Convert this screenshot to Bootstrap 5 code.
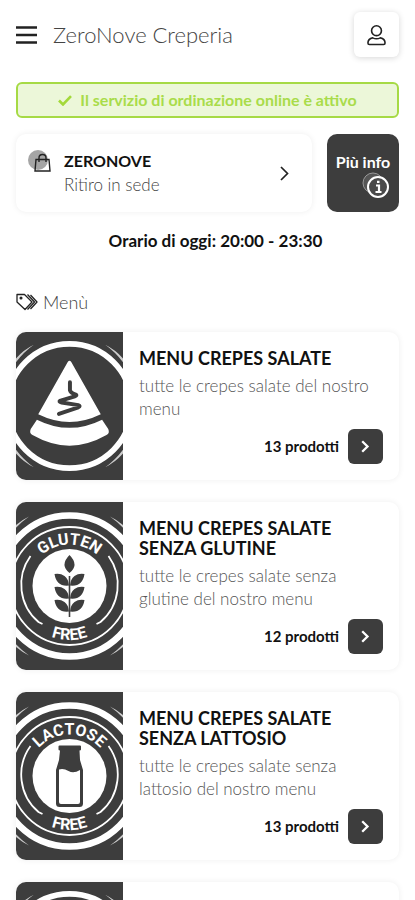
<!DOCTYPE html>
<html lang="it">
<head>
<meta charset="utf-8">
<meta name="viewport" content="width=device-width, initial-scale=1">
<title>ZeroNove Creperia</title>
<link href="https://cdn.jsdelivr.net/npm/bootstrap@5.3.0/dist/css/bootstrap.min.css" rel="stylesheet">
<style>
  :root { --ink: #3d3d3d; --lime: #a6da45; }
  body { font-family: Lato, "Century Gothic", sans-serif; color: #111; background: #fff; }
  svg { display: block; flex: none; }
  .soft { border: 0; border-radius: 10px; background: #fff; box-shadow: 0 0 6px rgba(0,0,0,.07); }
  .brand-name { font-size: 22px; font-weight: 300; line-height: 24px; color: #444; }
  .profile { width: 45px; height: 45px; border-radius: 6px; box-shadow: 0 1px 6px rgba(0,0,0,.16); }
  .status { height: 36px; margin-top: 25px; border: 2px solid var(--lime); border-radius: 6px; background: #ecf7d9; color: #a9dc4a; font-size: 16px; font-weight: 700; }
  .top-row { gap: 15px; }
  .place { height: 78px; padding: 0 23px 0 11px; color: #111; }
  .place-name { font-size: 16px; font-weight: 700; line-height: 24px; }
  .place-mode { font-size: 17px; font-weight: 300; line-height: 24px; color: #444; }
  .more-info { width: 72px; border: 0; border-radius: 10px; background: var(--ink); color: #fff; font-size: 16px; font-weight: 700; line-height: 20px; padding: 4px 9px 0; }
  .hours { font-size: 17px; font-weight: 700; line-height: 24px; margin-top: 17px; }
  .section-title { font-size: 18px; font-weight: 300; line-height: 24px; margin: 37px 0 18px; color: #444; gap: 5px; }
  .menu-list { gap: 22px; }
  .menu-item { color: #111; min-height: 148px; overflow: hidden; }
  .thumb { width: 107px; background: var(--ink); position: relative; flex: none; }
  .thumb svg { position: absolute; inset: 0; width: 100%; height: 100%; }
  .item-title { font-size: 18px; font-weight: 700; line-height: 20px; margin: 0 0 6px; }
  .item-text { font-size: 17px; font-weight: 300; line-height: 23px; margin: 0 0 9px; color: #555; }
  .item-count { font-size: 15px; font-weight: 700; gap: 9px; }
  .go { width: 35px; height: 35px; border-radius: 6px; background: var(--ink); }
  .ring-word { font: 700 16px Roboto, sans-serif; fill: #fff; text-anchor: middle; }
</style>
<script src="https://cdn.jsdelivr.net/npm/bootstrap@5.3.0/dist/js/bootstrap.bundle.min.js"></script>
</head>
<body>
<svg width="0" height="0" class="position-absolute" aria-hidden="true">
  <defs>
    <path id="arcTop" d="M42.500 84a41.500 41.500 0 0 1 83 0"/>
    <path id="arcBottom" d="M30 84a54 54 0 0 0 108 0"/>
    <g id="frame" fill="none" stroke="#fff">
      <circle cx="84" cy="84" r="70.500" stroke-width="6.500"/>
      <path id="tick" d="M43.500 14.500Q30 21 20 34V39Q30 24 43.500 14.500Z" fill="#ccc" stroke="none"/>
      <use href="#tick" transform="rotate(180 84 84)"/>
      <use href="#tick" transform="matrix(-1 0 0 1 168 0)"/>
      <use href="#tick" transform="matrix(1 0 0 -1 0 168)"/>
    </g>
    <g id="seal">
      <use href="#frame"/>
      <g fill="none" stroke="#fff" stroke-width="1.800">
        <circle cx="84" cy="84" r="59"/>
        <path d="M45 54A49 49 0 0 0 53 120L57 122M123 54A49 49 0 0 1 115 120L111 122"/>
      </g>
      <circle cx="84" cy="84" r="37" fill="#fff"/>
      <text class="ring-word"><textPath href="#arcBottom" startOffset="50%">FREE</textPath></text>
    </g>
  </defs>
</svg>

<div class="container-fluid px-3 pb-3">
  <header class="d-flex align-items-center pt-2 mt-1">
    <button type="button" class="btn p-0 border-0" aria-label="Apri menu">
      <svg width="21" height="18" viewBox="0 0 21 18" stroke="#222" stroke-width="2.400"><path d="M0 1.500h21M0 9h21M0 16.500h21"/></svg>
    </button>
    <span class="brand-name ms-3 me-auto">ZeroNove Creperia</span>
    <button type="button" class="btn profile p-0 border-0 bg-white d-flex align-items-center justify-content-center" aria-label="Profilo">
      <svg width="19" height="22" viewBox="0 0 20 22" fill="none" stroke="#222" stroke-width="1.700"><circle cx="10" cy="6.500" r="5.200"/><path d="M6 14Q10 16 14 14C17.500 14.500 19 17 19 19.500Q19 21 17.500 21H2.500Q1 21 1 19.500C1 17 2.500 14.500 6 14Z"/></svg>
    </button>
  </header>

  <main>
    <div class="status d-flex align-items-center justify-content-center" role="status">
      <svg class="me-2" width="14" height="11" viewBox="0 0 14 11" fill="none" stroke="#a3d93a" stroke-width="2.600"><path d="M1 5.500l4 4L13 1.200"/></svg>
      <span>Il servizio di ordinazione online è attivo</span>
    </div>

    <div class="top-row d-flex mt-3">
      <a href="#sede" class="soft place flex-grow-1 d-flex align-items-center text-decoration-none">
        <svg class="align-self-start mt-3" width="25" height="24" viewBox="0 0 25 24"><circle cx="11" cy="10" r="10" fill="#a5a5a5"/><path d="M9 9.500h13l1 11.500H8ZM12 12V8q0-3.500 3.500-3.500T19 8v4" fill="none" stroke="#222" stroke-width="1.400"/></svg>
        <span class="d-flex flex-column ms-2 ps-1 me-auto">
          <span class="place-name">ZERONOVE</span>
          <span class="place-mode">Ritiro in sede</span>
        </span>
        <svg width="9" height="15" viewBox="0 0 9 15" fill="none" stroke="#222" stroke-width="1.700"><path d="M1 1l6.500 6.500L1 14"/></svg>
      </a>
      <button type="button" class="more-info">
        <span class="d-flex justify-content-center text-nowrap">Più info</span>
        <svg class="ms-auto" width="28" height="27" viewBox="0 0 28 27"><circle cx="11" cy="11" r="10" fill="#555" stroke="#999"/><circle cx="16" cy="15" r="10" fill="#4a4a4a" stroke="#fff" stroke-width="2"/><path d="M14 13.500h3V20M13.500 20h6M15 9.800h2.500" fill="none" stroke="#fff" stroke-width="2.200"/></svg>
      </button>
    </div>

    <p class="hours text-center ps-3 mb-0">Orario di oggi: 20:00 - 23:30</p>

    <h2 class="section-title d-flex align-items-center">
      <svg width="22" height="18" viewBox="0 0 22 18" fill="none" stroke="#222" stroke-width="1.300" stroke-linejoin="round"><path d="M1 1.500h7.500l7.500 7.500-7 7.500L1 9ZM11.500 1.500L18.500 9l-7 7.500M14.500 2L21 9l-6.500 7"/><circle cx="5" cy="5" r=".9" fill="#222"/></svg>
      <span>Menù</span>
    </h2>

    <div class="menu-list d-flex flex-column">
      <a href="#salate" class="soft menu-item d-flex text-decoration-none">
        <span class="thumb"><svg viewBox="0 0 168 168" preserveAspectRatio="xMidYMid slice" aria-hidden="true">
          <use href="#frame"/>
          <path d="M82 34Q84 31 86 34L119.500 93.500Q84 111 48.500 93.500ZM47 99.500Q84 118 121 99.500L128 110Q130 115 126 117Q84 141 42 117Q38 115 40 110Z" fill="#fff"/>
          <path d="M84.500 57V66Q85 69 91 71Q93 72 90 73L74 78Q71 79 75 80L94 83Q97 84 94 85.500L72 93" fill="none" stroke="#3d3d3d" stroke-width="4.500" stroke-linecap="round" stroke-linejoin="round"/>
        </svg></span>
        <span class="d-flex flex-column flex-grow-1 p-3">
          <span class="item-title">MENU CREPES SALATE</span>
          <span class="item-text">tutte le crepes salate del nostro menu</span>
          <span class="item-count d-flex align-items-center justify-content-end mt-auto">13 prodotti
            <span class="go d-flex align-items-center justify-content-center"><svg width="9" height="13" viewBox="0 0 9 13" fill="none" stroke="#fff" stroke-width="2.300"><path d="M1.200 1.200l5.300 5.300-5.300 5.300"/></svg></span></span>
        </span>
      </a>

      <a href="#senza-glutine" class="soft menu-item d-flex text-decoration-none">
        <span class="thumb"><svg viewBox="0 0 168 168" preserveAspectRatio="xMidYMid slice">
          <use href="#seal"/>
          <text class="ring-word"><textPath href="#arcTop" startOffset="50%">GLUTEN</textPath></text>
          <g fill="#3d3d3d">
            <path d="M84 53Q94 63 84 71Q74 63 84 53ZM83.200 74h1.600v41h-1.600Z"/>
            <path id="leaves" d="M83.500 83.500Q71 85 69 72Q75 71 79 74Q83 77 83.500 83.500ZM84.500 83.500Q97 85 99 72Q93 71 89 74Q85 77 84.500 83.500Z"/>
            <use href="#leaves" y="13"/><use href="#leaves" y="26"/>
          </g>
        </svg></span>
        <span class="d-flex flex-column flex-grow-1 p-3">
          <span class="item-title">MENU CREPES SALATE SENZA GLUTINE</span>
          <span class="item-text">tutte le crepes salate senza glutine del nostro menu</span>
          <span class="item-count d-flex align-items-center justify-content-end mt-auto">12 prodotti
            <span class="go d-flex align-items-center justify-content-center"><svg width="9" height="13" viewBox="0 0 9 13" fill="none" stroke="#fff" stroke-width="2.300"><path d="M1.200 1.200l5.300 5.300-5.300 5.300"/></svg></span></span>
        </span>
      </a>

      <a href="#senza-lattosio" class="soft menu-item d-flex text-decoration-none">
        <span class="thumb"><svg viewBox="0 0 168 168" preserveAspectRatio="xMidYMid slice">
          <use href="#seal"/>
          <text class="ring-word"><textPath href="#arcTop" startOffset="50%">LACTOSE</textPath></text>
          <path d="M74 53.500h20.500q1 0 1 1v3q0 1-1.500 1L94.500 68 97.500 78V111.500Q97.500 115 94 115H74Q70.500 115 70.500 111.500V78L73.500 68 74.500 58.500q-1.500 0-1.500-1v-3q0-1 1-1Z" fill="#3d3d3d"/>
          <path d="M73.500 77.500Q78 76 83 79T94.500 78V110Q94.500 112 92.500 112H75.500Q73.500 112 73.500 110Z" fill="#fff"/>
        </svg></span>
        <span class="d-flex flex-column flex-grow-1 p-3">
          <span class="item-title">MENU CREPES SALATE SENZA LATTOSIO</span>
          <span class="item-text">tutte le crepes salate senza lattosio del nostro menu</span>
          <span class="item-count d-flex align-items-center justify-content-end mt-auto">13 prodotti
            <span class="go d-flex align-items-center justify-content-center"><svg width="9" height="13" viewBox="0 0 9 13" fill="none" stroke="#fff" stroke-width="2.300"><path d="M1.200 1.200l5.300 5.300-5.300 5.300"/></svg></span></span>
        </span>
      </a>

      <a href="#altro" class="soft menu-item d-flex text-decoration-none" aria-label="Altra categoria">
        <span class="thumb"><svg viewBox="0 0 168 168" preserveAspectRatio="xMidYMid slice" aria-hidden="true"><use href="#frame"/></svg></span>
      </a>
    </div>
  </main>
</div>
</body>
</html>
